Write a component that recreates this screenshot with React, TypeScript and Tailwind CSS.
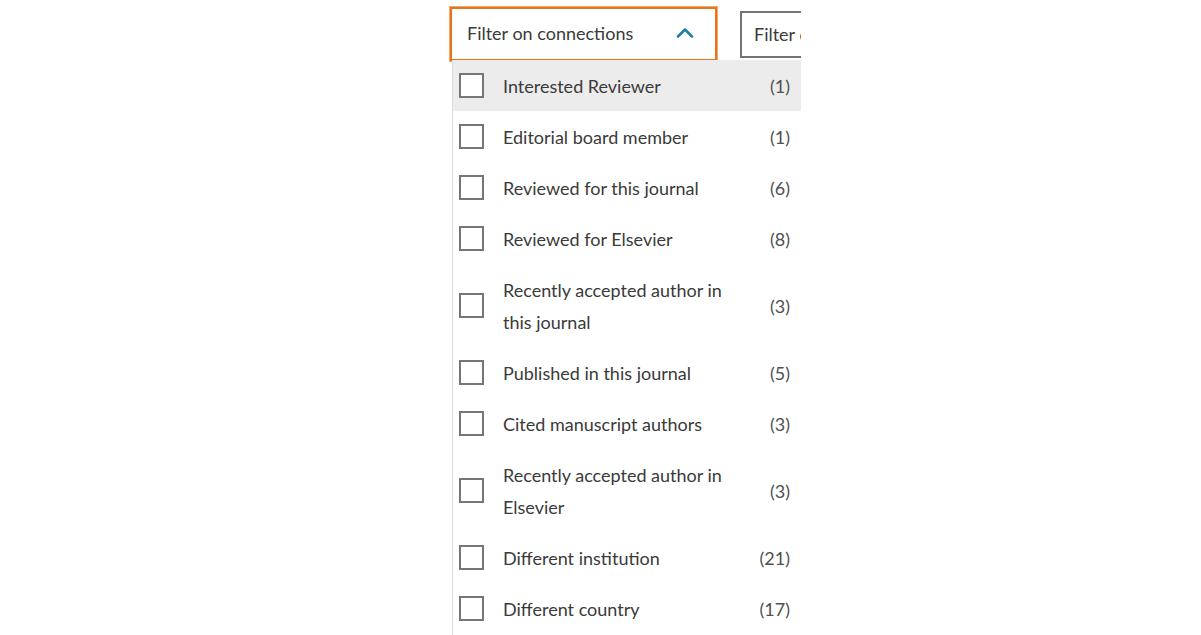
import { ChevronUp } from "lucide-react";

const options = [
  { label: "Interested Reviewer", count: 1 },
  { label: "Editorial board member", count: 1 },
  { label: "Reviewed for this journal", count: 6 },
  { label: "Reviewed for Elsevier", count: 8 },
  { label: "Recently accepted author in this journal", count: 3 },
  { label: "Published in this journal", count: 5 },
  { label: "Cited manuscript authors", count: 3 },
  { label: "Recently accepted author in Elsevier", count: 3 },
  { label: "Different institution", count: 21 },
  { label: "Different country", count: 17 },
];

export default function App() {
  return (
    <div className="h-[635px] w-full bg-white font-['Lato',sans-serif] text-[#3a3a3a]">
      <div className="relative h-[635px] w-[801px] overflow-hidden">
        <div className="flex items-center gap-[23px] pl-[450px] pt-[7px]">
          <button className="flex h-[54px] w-[267px] flex-none items-center justify-between border-2 border-[#e8731e] px-[15px] pb-[2px] outline outline-1 outline-offset-0 outline-[#f3a66a]">
            <span className="text-[18px]">Filter on connections</span>
            <ChevronUp size={28} strokeWidth={2.2} className="mr-[1px] text-[#1c7fa3]" />
          </button>
          <button className="flex h-[47px] w-[200px] flex-none items-center border-2 border-[#737373] px-[12px]">
            <span className="text-[18px]">Filter on keywords</span>
          </button>
        </div>

        <div className="absolute left-[452px] top-[60px] h-[600px] w-[349px] border-l border-[#dcdcdc] bg-white">
          {options.map((o, i) => (
            <div
              key={o.label}
              className={`flex items-center py-[9.5px] pl-[6px] pr-[11px] ${i === 0 ? "bg-[#ececec]" : ""}`}
            >
              <span className="h-[25px] w-[25px] flex-none border-2 border-[#767676] bg-white" />
              <span className="ml-[19px] w-[240px] flex-none text-[18px] leading-[32px]">{o.label}</span>
              <span className="ml-auto text-[18px] leading-[32px] text-[#505050]">({o.count})</span>
            </div>
          ))}
        </div>
      </div>
    </div>
  );
}
